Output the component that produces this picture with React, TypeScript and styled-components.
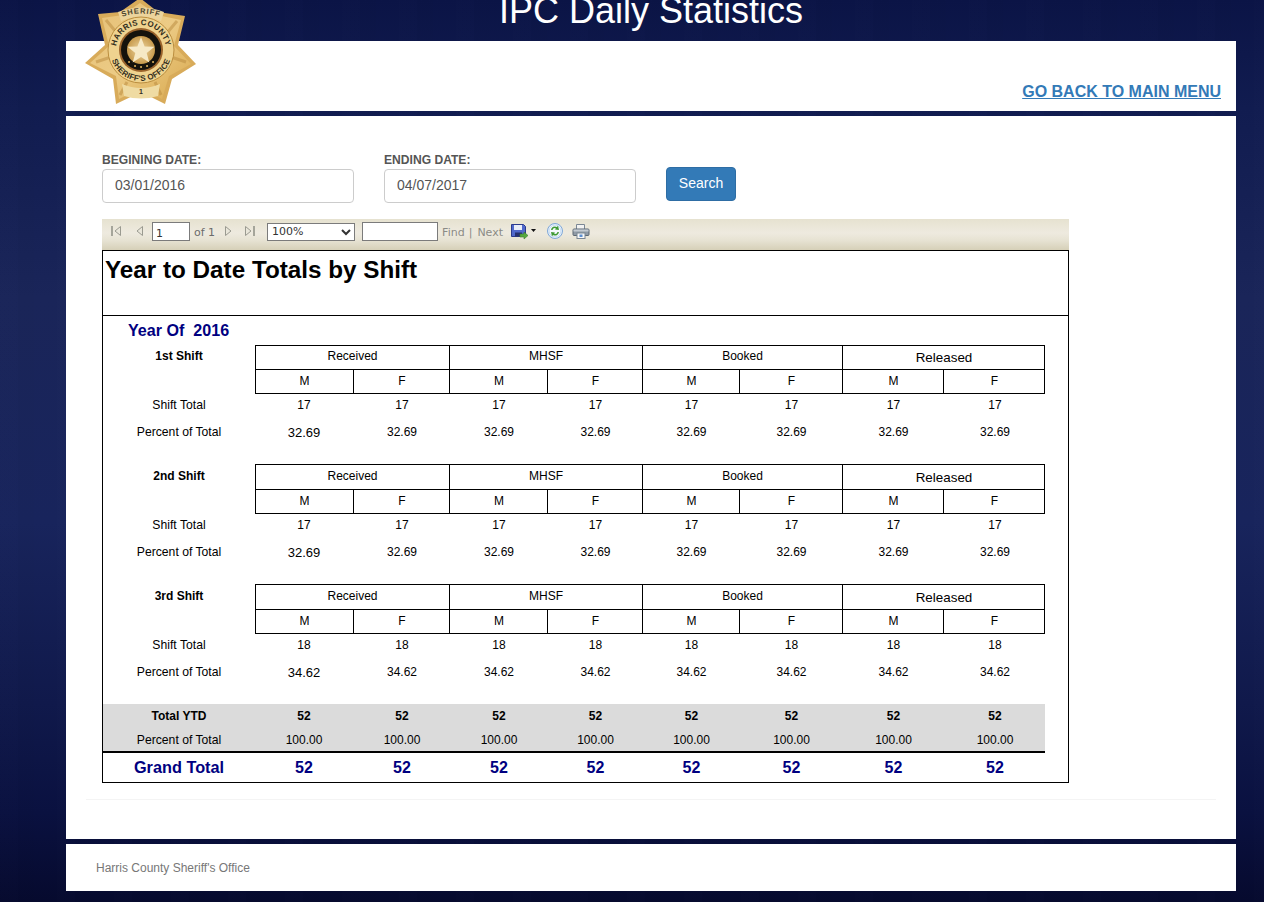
import React from 'react';
import styled, { createGlobalStyle } from 'styled-components';

const GlobalStyle = createGlobalStyle`
  html, body {
    margin: 0;
    padding: 0;
    height: 902px;
    overflow: hidden;
    font-family: "Liberation Sans", Arial, sans-serif;
  }
`;

const Page = styled.div`
  height: 902px;
  overflow: hidden;
  background:
    repeating-linear-gradient(90deg, rgba(255, 255, 255, 0.004) 0 18px, rgba(0, 0, 0, 0.012) 18px 34px, rgba(255, 255, 255, 0) 34px 57px),
    linear-gradient(180deg, #0b1446 0%, #111c50 12%, #1a2559 33%, #18245c 58%, #10194b 78%, #0a1140 90%, #060a2e 100%);
`;

const Wrapper = styled.div`
  width: 1170px;
  margin-left: 66px;
`;

const TitleBar = styled.div`
  height: 41px;
  text-align: center;
`;

const Title = styled.h1`
  margin: 0;
  position: relative;
  top: -7px;
  font-size: 36px;
  line-height: 36px;
  font-weight: 400;
  color: #fff;
`;

const HeaderPanel = styled.header`
  position: relative;
  height: 70px;
  margin-bottom: 5px;
  padding: 0 15px 9px 0;
  box-sizing: border-box;
  background: #fff;
  display: flex;
  align-items: flex-end;
  justify-content: flex-end;
`;

const BadgeWrap = styled.div`
  position: absolute;
  left: 17px;
  top: -43px;
  width: 116px;
  height: 108px;
`;

const BackLink = styled.a`
  font-size: 16px;
  line-height: 20px;
  font-weight: 700;
  color: #337ab7;
  text-decoration: underline;
`;

const Main = styled.main`
  height: 723px;
  margin-bottom: 5px;
  padding: 35px 20px 0;
  box-sizing: border-box;
  background: #fff;
`;

const Content = styled.div`
  padding-left: 16px;
`;

const SearchForm = styled.form`
  display: flex;
  align-items: flex-end;
  gap: 30px;
  margin-bottom: 16px;
`;

const Field = styled.div`
  display: flex;
  flex-direction: column;
  width: 252px;
`;

const FieldLabel = styled.label`
  font-size: 12.1px;
  line-height: 18px;
  font-weight: 700;
  color: #555;
`;

const DateInput = styled.input`
  height: 34px;
  padding: 0 12px 2px;
  box-sizing: border-box;
  border: 1px solid #ccc;
  border-radius: 4px;
  font: 14px "Liberation Sans", Arial, sans-serif;
  color: #555;
  background: #fff;
  outline: none;
`;

const SearchButton = styled.button`
  width: 70px;
  height: 34px;
  margin-bottom: 2px;
  padding: 0 0 2px;
  border: 1px solid #2e6da4;
  border-radius: 4px;
  background: #337ab7;
  color: #fff;
  font: 14px "Liberation Sans", Arial, sans-serif;
`;

const Toolbar = styled.div`
  width: 967px;
  height: 31px;
  box-sizing: border-box;
  display: flex;
  align-items: center;
  padding: 0 0 6px 8px;
  background: linear-gradient(180deg, #e6e2d0 0%, #eeeadf 45%, #e6e2d2 70%, #d6d0b8 100%);
`;

const NavIcon = styled.svg<{ $left: number; $lift?: number }>`
  display: block;
  flex: none;
  margin-left: ${(p) => p.$left}px;
  margin-bottom: ${(p) => p.$lift ?? 2}px;
`;

const PageInput = styled.input`
  width: 38px;
  height: 19px;
  margin-left: 8px;
  padding: 4px 0 0 3px;
  box-sizing: border-box;
  border: 1px solid #7b7b7b;
  background: #fff;
  font: 11px "DejaVu Sans", Verdana, sans-serif;
  color: #333;
  outline: none;
`;

const ToolText = styled.span<{ $left: number; $dim?: boolean }>`
  margin-left: ${(p) => p.$left}px;
  padding-top: 1px;
  font: 11px "DejaVu Sans", Verdana, sans-serif;
  color: ${(p) => (p.$dim ? '#8b8b85' : '#6b6b6b')};
  white-space: nowrap;
`;

const ZoomSelect = styled.select`
  width: 88px;
  height: 18px;
  margin-left: 11px;
  padding: 0;
  box-sizing: border-box;
  border: 1px solid #7b7b7b;
  border-radius: 0;
  background: #fff;
  font: 11px "DejaVu Sans", Verdana, sans-serif;
  color: #333;
  outline: none;
`;

const FindInput = styled.input`
  width: 76px;
  height: 19px;
  margin-left: 7px;
  padding: 0;
  box-sizing: border-box;
  border: 1px solid #7b7b7b;
  background: #fff;
  outline: none;
`;

const ReportTitleBox = styled.div`
  width: 967px;
  height: 66px;
  box-sizing: border-box;
  padding: 5px 0 0 2px;
  border: 1px solid #000;
`;

const ReportTitle = styled.h2`
  margin: 0;
  font-size: 24.25px;
  line-height: 28px;
  font-weight: 700;
  color: #000;
`;

const ReportBody = styled.div`
  width: 967px;
  height: 467px;
  box-sizing: border-box;
  border: 1px solid #000;
  border-top: 0;
`;

const YearLine = styled.div`
  height: 29px;
  padding-left: 25px;
  font-size: 16.1px;
  line-height: 29px;
  font-weight: 700;
  color: #000080;
  white-space: pre;
`;

const ReportGrid = styled.div<{ $shaded?: boolean }>`
  display: grid;
  grid-template-columns: 152px 98px 96px 98px 95px 97px 103px 101px 102px;
  width: 942px;
  color: #000;
  background: ${(p) => (p.$shaded ? '#dbdbdb' : 'transparent')};
`;

// The first block of the report sits a pixel tighter than the other two
const ShiftBlock = styled(ReportGrid)<{ $tight: boolean }>`
  grid-template-rows: ${(p) => (p.$tight ? '24px 25px 22px 32px' : '25px 25px 21px 34px')};
  margin-bottom: ${(p) => (p.$tight ? '16px' : '15px')};
`;

const ShiftName = styled.div<{ $tight: boolean }>`
  grid-row: span 2;
  text-align: center;
  font-size: 12px;
  line-height: ${(p) => (p.$tight ? '22px' : '24px')};
  font-weight: 700;
`;

const GroupHead = styled.div<{ $last?: boolean; $tight: boolean }>`
  grid-column: span 2;
  border-top: 1px solid #000;
  border-left: 1px solid #000;
  border-right: ${(p) => (p.$last ? '1px solid #000' : '0')};
  padding-left: ${(p) => (p.$last ? '1px' : '0')};
  box-sizing: border-box;
  text-align: center;
  font-size: ${(p) => (p.$last ? '13.4px' : '12px')};
  line-height: ${(p) => (p.$last ? (p.$tight ? '23px' : '25px') : p.$tight ? '21px' : '22px')};
`;

const SexCell = styled.div<{ $col: number }>`
  border: 1px solid #000;
  border-width: 1px ${(p) => (p.$col === 7 ? '1px' : '0')} 1px 1px;
  padding-left: ${(p) => (p.$col === 0 ? 0 : 1)}px;
  box-sizing: border-box;
  text-align: center;
  font-size: 12px;
  line-height: 22px;
`;

const RowLabel = styled.div<{ $bold?: boolean }>`
  text-align: center;
  font-size: ${(p) => (p.$bold ? '12px' : '12.2px')};
  font-weight: ${(p) => (p.$bold ? 700 : 400)};
  align-self: center;
`;

const Value = styled.div<{ $col: number; $bold?: boolean; $big?: boolean }>`
  padding-left: ${(p) => (p.$col === 0 ? 0 : 2)}px;
  text-align: center;
  font-size: ${(p) => (p.$big ? '13px' : '12px')};
  font-weight: ${(p) => (p.$bold ? 700 : 400)};
  align-self: center;
`;

const TotalsGrid = styled(ReportGrid)`
  grid-template-rows: 24px 23px;
  border-bottom: 2px solid #000;
`;

const GrandGrid = styled(ReportGrid)`
  height: 29px;
  align-items: center;
  font-size: 16px;
  font-weight: 700;
  color: #000080;
  text-align: center;
`;

const GrandLabel = styled.div`
  font-size: 16.3px;
`;

const GrandValue = styled.div<{ $col: number }>`
  padding-left: ${(p) => (p.$col === 0 ? 0 : 2)}px;
`;

const Rule = styled.hr`
  height: 1px;
  margin: 16px 0 0;
  border: 0;
  background: #f4f4f4;
`;

const Footer = styled.footer`
  height: 47px;
  padding-left: 30px;
  display: flex;
  align-items: center;
  background: #fff;
  font-size: 12px;
  color: #777;
`;

const groups = ['Received', 'MHSF', 'Booked', 'Released'];

const shifts = [
  { name: '1st Shift', total: '17', percent: '32.69', tight: true },
  { name: '2nd Shift', total: '17', percent: '32.69', tight: false },
  { name: '3rd Shift', total: '18', percent: '34.62', tight: false },
];

const columns = [0, 1, 2, 3, 4, 5, 6, 7];

function Badge() {
  // Coordinates are page pixels, hence the viewBox origin
  const star = '140,-2 158,12 185,16 178,45 196,64 172,79 165,104 141,92 116,104 113,79 85,63 105,45 98,14 120,12';
  const inner = '140,3 157,15 181,20 174,46 191,64 169,76 162,99 141,88 119,99 116,76 90,63 109,46 102,18 123,15';
  const sealStar = '141,37 144.6,46.5 154.5,46.8 146.7,53 149.3,62.5 141,57 132.7,62.5 135.3,53 127.5,46.8 137.4,46.5';

  return (
    <BadgeWrap>
      <svg width="116" height="108" viewBox="83 -2 116 108">
        <defs>
          <linearGradient id="gold" x1="0" y1="0" x2="1" y2="1">
            <stop offset="0" stopColor="#e6c077" />
            <stop offset="0.5" stopColor="#eccb85" />
            <stop offset="1" stopColor="#d9a94f" />
          </linearGradient>
          <radialGradient id="sealFace">
            <stop offset="0" stopColor="#efd9a6" />
            <stop offset="1" stopColor="#c79a4c" />
          </radialGradient>
          <path id="arcSheriff" d="M119 18 Q141 9 163 18" />
          <path id="arcCounty" d="M116 50 A25 25 0 0 1 166 50" />
          <path id="arcOffice" d="M110 50 A31 31 0 0 0 172 50" />
        </defs>
        <polygon points={star} fill="#d8ab5a" />
        <polygon points={inner} fill="url(#gold)" />
        <path d="M96 62 L111 57 M186 62 L171 57 M106 20 L116 32 M177 21 L167 33 M120 95 L127 82 M161 95 L155 82" stroke="#b98a3e" strokeWidth="3" opacity="0.5" />
        <path d="M118 12 Q141 3 164 12 L161 21 Q141 13 121 21 Z" fill="#ecd49c" />
        <text fontFamily="Liberation Sans" fontSize="7.5" fontWeight="700" fill="#4c4630" letterSpacing="0.9">
          <textPath href="#arcSheriff" startOffset="50%" textAnchor="middle">SHERIFF</textPath>
        </text>
        <path d="M122 84 Q141 92 160 84 L158 96 Q141 101 124 96 Z" fill="#efdba3" />
        <circle cx="141" cy="50" r="33" fill="#efd38f" stroke="#bb8e3f" strokeWidth="1" />
        <text fontFamily="Liberation Sans" fontSize="8" fontWeight="700" fill="#332e1c" letterSpacing="0.3">
          <textPath href="#arcCounty" startOffset="50%" textAnchor="middle">HARRIS COUNTY</textPath>
        </text>
        <text fontFamily="Liberation Sans" fontSize="8" fontWeight="700" fill="#332e1c" letterSpacing="0.2">
          <textPath href="#arcOffice" startOffset="50%" textAnchor="middle">SHERIFF'S OFFICE</textPath>
        </text>
        <circle cx="141" cy="50" r="22" fill="#9a632b" />
        <circle cx="141" cy="50" r="20" fill="#14120c" />
        <circle cx="141" cy="50" r="14" fill="url(#sealFace)" />
        <polygon points={sealStar} fill="#f6e9c6" />
        <path d="M129 62h.1M135 66h.1M141 67h.1M147 66h.1M153 62h.1" stroke="#d8ae5c" strokeWidth="2" strokeLinecap="round" />
        <text x="141" y="94" fontFamily="Liberation Sans" fontSize="7" fontWeight="700" fill="#332e1c" textAnchor="middle">1</text>
      </svg>
    </BadgeWrap>
  );
}

function FirstIcon({ left }: { left: number }) {
  return (
    <NavIcon $left={left} width="12" height="12" viewBox="0 0 12 12">
      <path d="M1.5 1v10M2.5 1v10" stroke="#a5a59a" />
      <path d="M10.5 1.5v9L5 6z" fill="#e9e6da" stroke="#9a9a90" />
    </NavIcon>
  );
}

function PrevIcon({ left }: { left: number }) {
  return (
    <NavIcon $left={left} width="9" height="12" viewBox="0 0 9 12">
      <path d="M7.5 1.500v9L2 6z" fill="#e9e6da" stroke="#9a9a90" />
    </NavIcon>
  );
}

function NextIcon({ left }: { left: number }) {
  return (
    <NavIcon $left={left} width="9" height="12" viewBox="0 0 9 12">
      <path d="M1.500 1.500v9L7 6z" fill="#e9e6da" stroke="#9a9a90" />
    </NavIcon>
  );
}

function LastIcon({ left }: { left: number }) {
  return (
    <NavIcon $left={left} width="12" height="12" viewBox="0 0 12 12">
      <path d="M1.500 1.500v9L7 6z" fill="#e9e6da" stroke="#9a9a90" />
      <path d="M9.500 1v10M10.500 1v10" stroke="#a5a59a" />
    </NavIcon>
  );
}

function SaveIcon() {
  return (
    <NavIcon $left={8} $lift={0} width="26" height="17" viewBox="0 0 26 17">
      <path d="M.5 1.500h12l2 2v10H.5z" fill="#5068cc" stroke="#2c3a8c" />
      <rect x="3" y="2" width="8" height="5" fill="#e8ecf8" />
      <rect x="4" y="9.500" width="7" height="4" fill="#26306f" />
      <path d="M9 11h4V9l4 3.500-4 3.500v-2H9z" fill="#55a83f" stroke="#3c7d2c" strokeWidth=".6" />
      <path d="M20 6h5l-2.500 3z" fill="#111" />
    </NavIcon>
  );
}

function RefreshIcon() {
  return (
    <NavIcon $left={9} width="18" height="18" viewBox="0 0 18 18">
      <circle cx="9" cy="9" r="7.500" fill="#e3eefa" stroke="#7fa8d8" />
      <circle cx="9" cy="9" r="5.800" fill="#f5f9fd" stroke="#b9d2ee" strokeWidth=".6" />
      <path d="M5 8a4 4 0 0 1 6-3l1-1.500 1 4.500-4-.5 1-1a2.500 2.500 0 0 0-3.500 1.500z" fill="#3f9a35" />
      <path d="M13 10a4 4 0 0 1-6 3l-1 1.500-1-4.500 4 .5-1 1a2.500 2.500 0 0 0 3.500-1.500z" fill="#3f9a35" />
    </NavIcon>
  );
}

function PrintIcon() {
  return (
    <NavIcon $left={8} width="18" height="16" viewBox="0 0 18 16">
      <path d="M4.500 6V1.500h8V6" fill="#f2f2f2" stroke="#7b8794" />
      <rect x="1" y="6" width="16" height="6.500" rx="1" fill="#8f9aa5" stroke="#5d6874" />
      <rect x="1.500" y="6.500" width="15" height="2" fill="#c3cad1" />
      <rect x="5" y="10" width="8" height="5.500" fill="#f7f7f7" stroke="#7b8794" />
      <rect x="7.500" y="11.500" width="3" height="2.500" fill="#5d8fd0" />
    </NavIcon>
  );
}

interface IShiftTableProps {
  name: string;
  total: string;
  percent: string;
  tight: boolean;
}

function ShiftTable({ name, total, percent, tight }: IShiftTableProps) {
  return (
    <ShiftBlock $tight={tight}>
      <ShiftName $tight={tight}>{name}</ShiftName>
      {groups.map((group, i) => (
        <GroupHead key={group} $last={i === 3} $tight={tight}>{group}</GroupHead>
      ))}
      {columns.map((c) => (
        <SexCell key={c} $col={c}>{c % 2 === 0 ? 'M' : 'F'}</SexCell>
      ))}
      <RowLabel>Shift Total</RowLabel>
      {columns.map((c) => (
        <Value key={c} $col={c}>{total}</Value>
      ))}
      <RowLabel>Percent of Total</RowLabel>
      {columns.map((c) => (
        <Value key={c} $col={c} $big={c === 0}>{percent}</Value>
      ))}
    </ShiftBlock>
  );
}

export default function App() {
  return (
    <Page>
      <GlobalStyle />
      <Wrapper>
        <TitleBar>
          <Title>IPC Daily Statistics</Title>
        </TitleBar>
        <HeaderPanel>
          <Badge />
          <BackLink href="#">GO BACK TO MAIN MENU</BackLink>
        </HeaderPanel>
        <Main>
          <Content>
            <SearchForm>
              <Field>
                <FieldLabel>BEGINING DATE:</FieldLabel>
                <DateInput defaultValue="03/01/2016" />
              </Field>
              <Field>
                <FieldLabel>ENDING DATE:</FieldLabel>
                <DateInput defaultValue="04/07/2017" />
              </Field>
              <SearchButton type="button">Search</SearchButton>
            </SearchForm>
            <Toolbar>
              <FirstIcon left={0} />
              <PrevIcon left={13} />
              <PageInput defaultValue="1" />
              <ToolText $left={4}>of 1</ToolText>
              <NextIcon left={9} />
              <LastIcon left={11} />
              <ZoomSelect defaultValue="100%">
                <option>100%</option>
              </ZoomSelect>
              <FindInput />
              <ToolText $left={4} $dim>Find</ToolText>
              <ToolText $left={4} $dim>|</ToolText>
              <ToolText $left={5} $dim>Next</ToolText>
              <SaveIcon />
              <RefreshIcon />
              <PrintIcon />
            </Toolbar>
            <ReportTitleBox>
              <ReportTitle>Year to Date Totals by Shift</ReportTitle>
            </ReportTitleBox>
            <ReportBody>
              <YearLine>Year Of  2016</YearLine>
              {shifts.map((shift) => (
                <ShiftTable key={shift.name} {...shift} />
              ))}
              <TotalsGrid $shaded>
                <RowLabel $bold>Total YTD</RowLabel>
                {columns.map((c) => (
                  <Value key={c} $col={c} $bold>52</Value>
                ))}
                <RowLabel>Percent of Total</RowLabel>
                {columns.map((c) => (
                  <Value key={c} $col={c}>100.00</Value>
                ))}
              </TotalsGrid>
              <GrandGrid>
                <GrandLabel>Grand Total</GrandLabel>
                {columns.map((c) => (
                  <GrandValue key={c} $col={c}>52</GrandValue>
                ))}
              </GrandGrid>
            </ReportBody>
          </Content>
          <Rule />
        </Main>
        <Footer>Harris County Sheriff's Office</Footer>
      </Wrapper>
    </Page>
  );
}
